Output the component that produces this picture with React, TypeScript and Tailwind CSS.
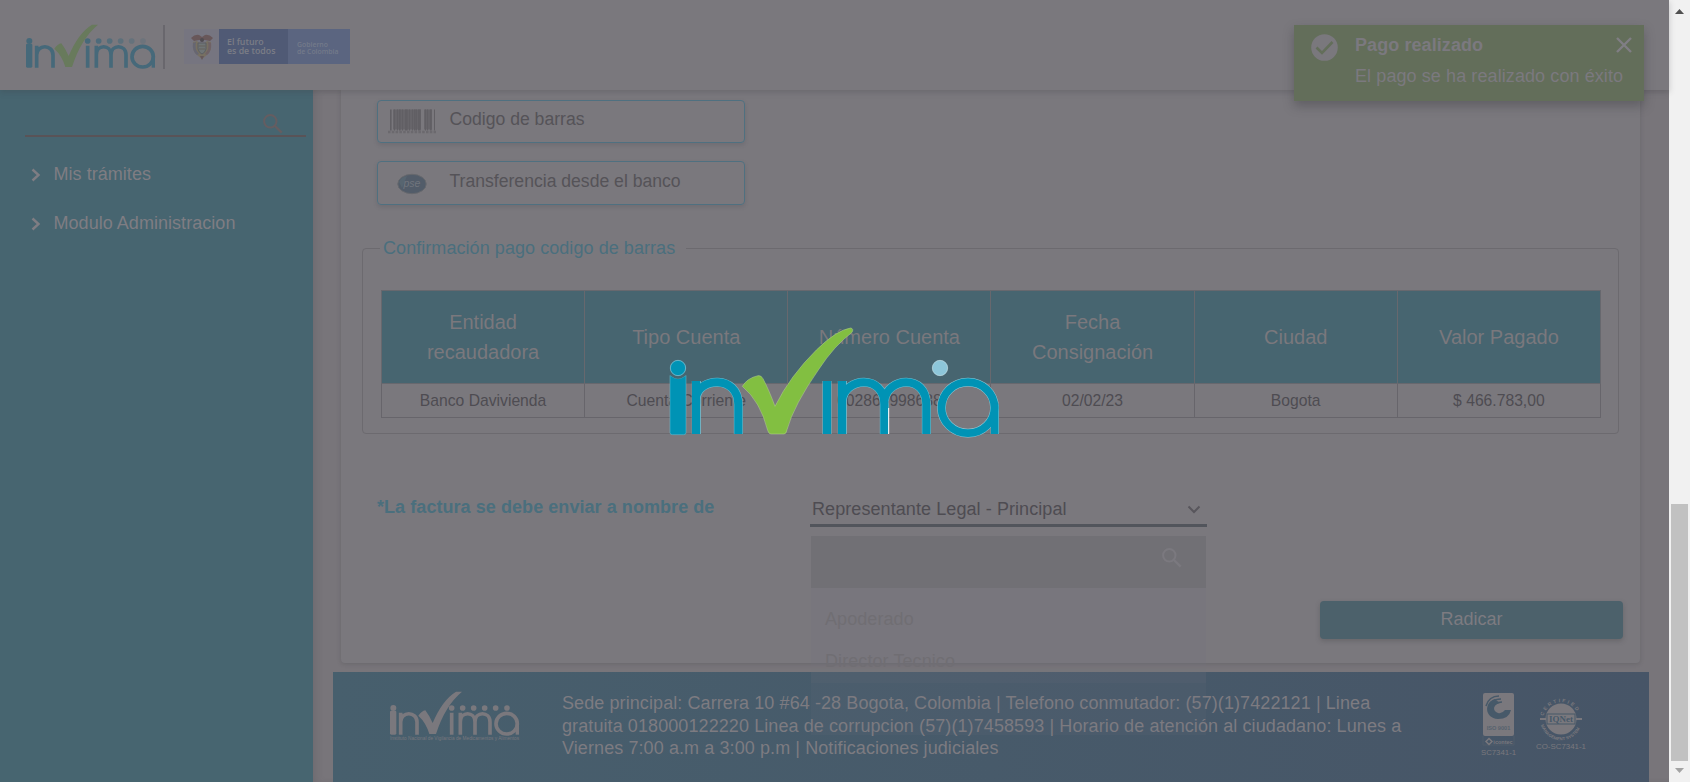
import React from "react";

function Mark({ mono = false }: { mono?: boolean }) {
  const blue = mono ? "#7a787d" : "#46697a";
  const green = mono ? "#7a787d" : "#687a5c";
  return (
    <svg width="132" height="47" viewBox="0 0 396 141" fill="none" className="block shrink-0">
      <rect x="3" y="62" width="19" height="72" rx="4" fill={blue} />
      <circle cx="13" cy="54" r="9" fill={blue} />
      <path d="M35 134V68M35 96C35 63 84 63 84 96V134" stroke={blue} strokeWidth="11" />
      <path d="M88 77Q98 63 109 61Q122 78 131 99Q160 30 201 5H219Q168 47 141 132H121Q111 98 88 77Z" fill={green} />
      <path d="M188 134V68M214 134V68M214 96C214 63 258 63 258 96V134M258 96C258 63 303 63 303 96V134" stroke={blue} strokeWidth="11" />
      <ellipse cx="353" cy="101" rx="32" ry="31" stroke={blue} strokeWidth="11" />
      <path d="M385 100V134" stroke={blue} strokeWidth="10" />
      {[188, 221, 254, 287, 320, 354].map((x, i) => (
        <circle key={x} cx={x} cy="54" r="8.500" fill={blue} opacity={mono ? 1 : 1 - i * 0.15} />
      ))}
    </svg>
  );
}

function LoaderLogo() {
  return (
    <svg width="370" height="140" viewBox="0 0 1110 420" fill="none" className="block">
      <path d="M60 196Q84 216 108 196V368Q108 374 101 374H67Q60 374 60 368Z" fill="#0093b5" stroke="#6fbdd0" strokeWidth="1.500" />
      <circle cx="84" cy="174" r="23" fill="#0093b5" stroke="#8fd0e2" strokeWidth="2" />
      <path d="M62 194Q84 213 106 194" stroke="#476873" strokeWidth="5" />
      <g stroke="#6fbdd0" strokeWidth="27">
        <path d="M139 372V213M139 264C143 203 265 192 265 284V372" />
        <path d="M531 372V213M577 372V213M577 272C582 202 703 190 703 284V372M703 272C711 202 829 190 829 284V372" />
      </g>
      <g stroke="#0093b5" strokeWidth="24">
        <path d="M138 372V213M138 264C143 203 265 192 265 284V372" />
        <path d="M531 372V213M576 372V213M576 272C582 202 703 190 703 284V372M703 272C711 202 829 190 829 284V372" />
      </g>
      <path d="M716 294V372" stroke="#fff" strokeWidth="3" />
      <circle cx="870" cy="174" r="23" fill="#8dc6d9" stroke="#c5dfe6" strokeWidth="2" />
      <ellipse cx="954" cy="293" rx="79.500" ry="76.500" stroke="#8fc9d7" strokeWidth="26" />
      <path d="M1034.500 284V372" stroke="#6fbdd0" strokeWidth="25" />
      <ellipse cx="954" cy="293" rx="79.500" ry="76.500" stroke="#0093b5" strokeWidth="23" />
      <path d="M1034 280V372" stroke="#0093b5" strokeWidth="22" />
      <path
        d="M277 229Q292 204 324 197Q333 195 339 206Q356 238 375 289Q420 198 499 120Q560 60 602 54Q612 56 606 67Q552 108 507 177Q431 286 411 359Q409 372 402 372H363Q356 372 353 361Q331 274 277 229Z"
        fill="#82bf41"
        stroke="#b5d390"
        strokeWidth="1.500"
      />
    </svg>
  );
}

function CoatOfArms() {
  return (
    <svg width="24" height="27" viewBox="0 0 24 27" className="block">
      <path d="M1 4Q5 0 9 1L12 3L15 1Q19 0 23 4L20 7L15 6H9L4 7Z" fill="#685759" />
      <path d="M3 8L7 7L12 12L17 7L21 8Q22 17 17 21L12 25L7 21Q2 17 3 8Z" fill="#777062" />
      <path d="M3 9Q2 17 7 21L9 20Q4 15 6 8Z" fill="#666672" />
      <path d="M21 9Q22 17 17 21L15 20Q20 15 18 8Z" fill="#6f6266" />
      <path d="M8 9H16V15Q15 19 12 20Q9 19 8 15Z" fill="#6f7576" stroke="#5c5f62" />
      <path d="M8.500 12H15.500M9 15H15" stroke="#67625d" />
      <circle cx="12" cy="6" r="2" fill="#504c51" />
      <path d="M10 22L12 26L14 22Z" fill="#65585a" />
    </svg>
  );
}

function Chevron() {
  return (
    <svg width="10" height="14" viewBox="0 0 10 14" fill="none" className="block">
      <path d="M1.500 1.500L7.500 7L1.500 12.500" stroke="#7f7d83" strokeWidth="2.400" />
    </svg>
  );
}

function Search({ color }: { color: string }) {
  return (
    <svg width="20" height="20" viewBox="0 0 20 20" fill="none" className="block">
      <circle cx="7.300" cy="7.300" r="6.200" stroke={color} strokeWidth="2" />
      <path d="M12 12L18.700 18.700" stroke={color} strokeWidth="2.400" />
    </svg>
  );
}

const bars = [2, 6, 9, 11, 14, 17, 18, 21, 24, 26, 28, 30, 31, 37, 39, 42, 46];

function Barcode() {
  return (
    <svg width="50" height="25" viewBox="0 0 50 25" className="block">
      <rect x="5" y="0.500" width="28" height="20" fill="#67656a" />
      <rect x="36" y="0.500" width="8" height="20" fill="#67656a" />
      {bars.map((x, i) => (
        <rect key={x} x={x} y="0.500" width={i % 3 === 0 ? 1.6 : 1} height="21" fill="#615f64" />
      ))}
      <path d="M0 23H48" stroke="#6b696e" strokeWidth="2.500" strokeDasharray="2.500 1.300" />
    </svg>
  );
}

function Pse() {
  return (
    <svg width="30" height="22" viewBox="0 0 30 22" className="block">
      <ellipse cx="15" cy="11" rx="14.200" ry="9.700" fill="#525c69" stroke="#66686d" />
      <path d="M2 9Q4 4 10 3L5 15Z" fill="#5c6a74" opacity="0.6" />
      <text x="15" y="13.500" textAnchor="middle" fontFamily="Liberation Sans" fontStyle="italic" fontSize="10.500" fill="#70757d">pse</text>
    </svg>
  );
}

function Icontec() {
  return (
    <svg width="36" height="64" viewBox="0 0 36 64" className="block">
      <rect x="2" y="0" width="31" height="43" rx="2" fill="#7a787d" />
      <path d="M14 6C3 9 3 25 17 26Q28 26 30 17H24Q21 21 17 20C11 18 12 11 19 10Q15 7 14 6Z" fill="#475969" />
      <path d="M5 13Q8 3 18 3M8 16Q9 6 20 6M11 17Q13 9 21 9" stroke="#475969" strokeWidth="1.500" fill="none" />
      <text x="17.500" y="37" textAnchor="middle" fontFamily="Liberation Sans" fontSize="5.600" fontWeight="bold" fill="#56626e">ISO 9001</text>
      <path d="M2 43V52H33V43" fill="none" stroke="#505d6a" />
      <path d="M8 45.500L11 48.500L8 51.500L5 48.500Z" fill="none" stroke="#7a787d" strokeWidth="1.500" />
      <text x="22" y="50.500" textAnchor="middle" fontFamily="Liberation Sans" fontSize="5.500" fontWeight="bold" fill="#7a787d">icontec</text>
      <text x="17.500" y="62" textAnchor="middle" fontFamily="Liberation Sans" fontSize="7.800" fill="#7a787d">SC7341-1</text>
    </svg>
  );
}

function IqNet() {
  return (
    <svg width="50" height="58" viewBox="0 -4 50 58" className="block">
      <defs>
        <path id="arcTop" d="M7.500 19A18 18 0 0 1 42.500 19" />
        <path id="arcBottom" d="M4.500 26A20.800 20.800 0 0 0 45.500 26" />
      </defs>
      <circle cx="25" cy="22" r="15.500" fill="#7a787d" />
      <path d="M4 22H46" stroke="#7a787d" strokeWidth="2" />
      <rect x="11" y="17" width="28" height="10" fill="#7a787d" stroke="#475969" strokeWidth="1" />
      <text x="25" y="25.200" textAnchor="middle" fontFamily="Liberation Serif" fontSize="9" fontWeight="bold" fill="#475969">IQNet</text>
      <text fontFamily="Liberation Sans" fontSize="5" fontWeight="bold" fill="#7a787d" letterSpacing="2"><textPath href="#arcTop">CERTIFIED</textPath></text>
      <text fontFamily="Liberation Sans" fontSize="4.300" fontWeight="bold" fill="#7a787d"><textPath href="#arcBottom" startOffset="2">MANAGEMENT SYSTEM</textPath></text>
      <text x="25" y="52" textAnchor="middle" fontFamily="Liberation Sans" fontSize="7.900" fill="#7a787d">CO-SC7341-1</text>
    </svg>
  );
}

const payment: [string, string][] = [
  ["Entidad recaudadora", "Banco Davivienda"],
  ["Tipo Cuenta", "Cuenta Corriente"],
  ["Número Cuenta", "002869998688"],
  ["Fecha Consignación", "02/02/23"],
  ["Ciudad", "Bogota"],
  ["Valor Pagado", "$ 466.783,00"],
];

function Header() {
  return (
    <header className="relative z-10 flex h-[90px] shrink-0 items-start bg-[#7a787d] pl-[25px] pt-[23px] shadow-[0_2px_6px_rgba(60,58,64,0.25)]">
      <Mark />
      <div className="ml-[6px] mt-[2px] h-11 w-[2px] bg-[#69676d]" />
      <div className="ml-[19px] mt-[6px] flex h-[35px] w-[166px]">
        <div className="flex w-[35px] items-center justify-center bg-[#767580] pt-[1px]"><CoatOfArms /></div>
        <div className="w-[69px] bg-[#505a75] pl-2 pt-[9px] text-[8.8px] leading-[9px] font-semibold whitespace-nowrap text-[#7b7d86] font-[Open_Sans,sans-serif]">
          El futuro<br />es de todos
        </div>
        <div className="flex-1 bg-[#5b6580] pl-[9px] pt-[12px] text-[6.9px] font-semibold leading-[7px] whitespace-nowrap text-[#737a8a] font-[Open_Sans,sans-serif]">
          Gobierno<br />de Colombia
        </div>
      </div>
    </header>
  );
}

function Sidebar() {
  return (
    <aside className="flex w-[313px] shrink-0 flex-col bg-[#476570] pl-[25px] pt-6">
      <div className="flex h-[23px] w-[281px] items-start justify-end border-b-2 border-[#595357] pr-[23px]">
        <Search color="#655d61" />
      </div>
      {["Mis trámites", "Modulo Administracion"].map((t) => (
        <div key={t} className="mt-[25px] flex h-6 items-center">
          <div className="ml-[6px] w-[22.5px] shrink-0 pt-[2px]"><Chevron /></div>
          <span className="text-lg tracking-[0.04px] text-[#7f7d83]">{t}</span>
        </div>
      ))}
    </aside>
  );
}

function Select() {
  return (
    <div className="relative w-[397px]">
      <div className="flex h-[33px] items-center justify-between border-b-[3px] border-[#52555c] pl-[2px] pr-[6px]">
        <span className="text-lg tracking-[0.08px] text-[#4e4c52]">Representante Legal - Principal</span>
        <svg width="14" height="9" viewBox="0 0 14 9" fill="none"><path d="M1.500 1.500L7 7L12.500 1.500" stroke="#58565c" strokeWidth="2" /></svg>
      </div>
      <div className="absolute left-px top-[42px] z-10 h-[199px] w-[395px] bg-[#7a787d]/10 text-lg tracking-[0.08px] text-[#706e73]">
        <div className="flex h-[52px] justify-end bg-[#717075] pr-6 pt-3"><Search color="#7b797f" /></div>
        <div className="h-[95px] bg-[#7a787d]/10 pl-[14px] pt-[10px]">
          <div className="h-[42px] leading-[42px]">Apoderado</div>
          <div className="h-[42px] leading-[42px]">Director Tecnico</div>
        </div>
      </div>
    </div>
  );
}

function Card() {
  return (
    <section className="ml-[28px] flex h-[573px] w-[1299px] shrink-0 flex-col rounded-b bg-[#7a787d] pt-[10px] shadow-[0_1px_4px_rgba(60,58,64,0.25)]">
      <div className="ml-9 flex h-[43px] w-[368px] shrink-0 items-start rounded border border-[#4f7080] pl-[10px] pt-2 shadow-[0_2px_4px_rgba(60,58,64,0.18)]">
        <Barcode />
        <span className="ml-[11.5px] -mt-2 text-[17.6px] leading-[37px] text-[#555358]">Codigo de barras</span>
      </div>
      <div className="ml-9 mt-[18px] flex h-11 w-[368px] shrink-0 items-start rounded border border-[#4f7080] pl-[19px] pt-[11px] shadow-[0_2px_4px_rgba(60,58,64,0.18)]">
        <Pse />
        <span className="-mt-[11px] ml-[22.5px] text-[17.6px] leading-[38px] text-[#555358]">Transferencia desde el banco</span>
      </div>
      <fieldset className="ml-[21px] mt-8 h-[197px] w-[1257px] shrink-0 rounded border border-[#6c6a6f] pl-[18px]">
        <legend className="-ml-px h-[22px] w-[306px] pl-[3px] text-lg leading-[22px] tracking-[0.06px] whitespace-nowrap text-[#4a6f7d]">Confirmación pago codigo de barras</legend>
        <table className="mt-[31px] w-[1220px] table-fixed border-collapse text-center">
          <thead>
            <tr className="h-[93px] bg-[#476570]">
              {payment.map(([h]) => (
                <th key={h} className="border border-[#67686e] px-7 text-xl font-normal leading-[30px] text-[#7a787d]">{h}</th>
              ))}
            </tr>
          </thead>
          <tbody>
            <tr className="h-[34px]">
              {payment.map(([h, v]) => (
                <td key={h} className="border border-[#67656b] p-0 text-[15.7px] leading-5 text-[#4e4c52]">{v}</td>
              ))}
            </tr>
          </tbody>
        </table>
      </fieldset>
      <div className="ml-9 mt-[60px] flex h-[33px] shrink-0">
        <div className="w-[433px] text-lg font-bold leading-[26px] tracking-[0.06px] text-[#4a6f7d]">*La factura se debe enviar a nombre de</div>
        <Select />
      </div>
      <div className="mr-[17px] mt-[74px] flex h-[38px] w-[303px] shrink-0 items-center justify-center self-end rounded bg-[#4c616b] pb-[2px] text-lg text-[#7d7b81] shadow-[0_2px_5px_rgba(60,58,64,0.3)]">
        Radicar
      </div>
    </section>
  );
}

function Footer() {
  return (
    <footer className="ml-5 mt-[9px] flex h-[110px] w-[1316px] shrink-0 items-start bg-linear-to-r from-[#475f6d] to-[#475567] pl-14 pt-[18px]">
      <div className="w-[173px]">
        <Mark mono />
        <div className="-mt-px pl-px text-[4.75px] leading-[6px] whitespace-nowrap text-[#77777d]">Instituto Nacional de Vigilancia de Medicamentos y Alimentos</div>
      </div>
      <p className="w-[880px] pt-[2px] text-lg leading-[22.5px] tracking-[0.09px] whitespace-nowrap text-[#7d7b81]">
        Sede principal: Carrera 10 #64 -28 Bogota, Colombia | Telefono conmutador: (57)(1)7422121 | Linea<br />
        gratuita 018000122220 Linea de corrupcion (57)(1)7458593 | Horario de atención al ciudadano: Lunes a<br />
        Viernes 7:00 a.m a 3:00 p.m | Notificaciones judiciales
      </p>
      <div className="ml-[39px] flex gap-[19px] pt-[3px]">
        <Icontec />
        <IqNet />
      </div>
    </footer>
  );
}

function Toast() {
  return (
    <div className="absolute left-[1294px] top-[25px] z-20 flex h-[76px] w-[350px] bg-[#636e5a] pl-[17px] pt-[9px] text-lg text-[#7b797f] shadow-[0_5px_10px_rgba(50,48,54,0.35)]">
      <svg width="27" height="27" viewBox="0 0 27 27" fill="none" className="shrink-0">
        <circle cx="13.500" cy="13.500" r="13.300" fill="#7a787d" />
        <path d="M5.500 13.500L11 19L21.500 8" stroke="#636e5a" strokeWidth="2.600" />
      </svg>
      <div className="-mt-[3px] ml-[17px] min-w-0 flex-1 whitespace-nowrap">
        <div className="flex h-7 items-center font-bold tracking-[0.08px]">Pago realizado</div>
        <div className="mt-[3px] flex h-7 items-center tracking-[0.09px]">El pago se ha realizado con éxito</div>
      </div>
      <svg width="16" height="16" viewBox="0 0 16 16" fill="none" className="mr-3 mt-[3px] shrink-0">
        <path d="M1 1L15 15M15 1L1 15" stroke="#807e84" strokeWidth="2.400" />
      </svg>
    </div>
  );
}

function Scrollbar() {
  return (
    <div className="flex w-[21px] shrink-0 flex-col items-center bg-[#f1f1f1]">
      <svg width="9" height="5" viewBox="0 0 9 5" className="mt-[9px]"><path d="M0 5L4.500 0L9 5Z" fill="#505050" /></svg>
      <div className="mt-[490px] h-[257px] w-[17px] bg-[#c1c1c1]" />
      <svg width="9" height="5" viewBox="0 0 9 5" className="mt-[7px]"><path d="M0 0L4.500 5L9 0Z" fill="#a3a3a3" /></svg>
    </div>
  );
}

export default function App() {
  return (
    <div className="relative flex h-[782px] w-[1690px] overflow-hidden font-[Liberation_Sans,Arial,sans-serif]">
      <div className="flex w-[1669px] shrink-0 flex-col bg-[#78757a]">
        <Header />
        <div className="flex min-h-0 flex-1">
          <Sidebar />
          <main className="flex flex-1 flex-col shadow-[inset_6px_0_8px_-4px_rgba(60,58,64,0.2)]">
            <Card />
            <Footer />
          </main>
        </div>
      </div>
      <Scrollbar />
      <Toast />
      <div className="absolute left-0 top-0 z-30 flex h-[760px] w-[1670px] items-center justify-center">
        <LoaderLogo />
      </div>
    </div>
  );
}
